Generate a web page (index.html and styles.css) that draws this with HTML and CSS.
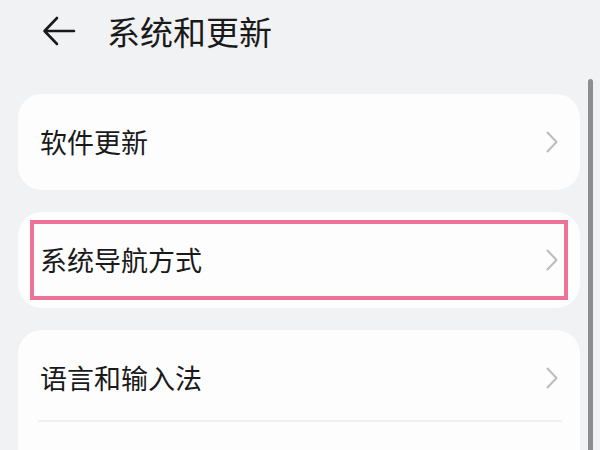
FILE: index.html
```html
<!DOCTYPE html>
<html lang="zh-CN">
<head>
<meta charset="utf-8">
<link rel="stylesheet" href="styles.css">
</head>
<body>
<div class="screen">
  <header class="header">
    <svg class="back" width="34" height="32" viewBox="0 0 34 32">
      <path d="M32 16 H3 M15 3 L2.5 16 L15 29" fill="none" stroke="#1a1a1a" stroke-width="2.6" stroke-linecap="round" stroke-linejoin="round"/>
    </svg>
    <h1 class="title">系统和更新</h1>
  </header>
  <main class="list">
    <section class="card">
      <div class="row">
        <span class="label">软件更新</span>
        <svg class="chev" width="12" height="22" viewBox="0 0 12 22"><path d="M1.5 1.5 L10.5 11 L1.5 20.5" fill="none" stroke="#bcbcbc" stroke-width="2" stroke-linecap="round" stroke-linejoin="round"/></svg>
      </div>
    </section>
    <section class="card">
      <div class="row highlighted">
        <span class="label">系统导航方式</span>
        <svg class="chev" width="12" height="22" viewBox="0 0 12 22"><path d="M1.5 1.5 L10.5 11 L1.5 20.5" fill="none" stroke="#bcbcbc" stroke-width="2" stroke-linecap="round" stroke-linejoin="round"/></svg>
      </div>
    </section>
    <section class="card">
      <div class="row first">
        <span class="label">语言和输入法</span>
        <svg class="chev" width="12" height="22" viewBox="0 0 12 22"><path d="M1.5 1.5 L10.5 11 L1.5 20.5" fill="none" stroke="#bcbcbc" stroke-width="2" stroke-linecap="round" stroke-linejoin="round"/></svg>
      </div>
      <div class="divider"></div>
      <div class="row"></div>
    </section>
  </main>
  <div class="scrollbar"></div>
</div>
</body>
</html>
```
FILE: styles.css
```css
html, body {
  margin: 0;
  padding: 0;
}
body {
  background: #f1f2f4;
  font-family: "Noto Sans CJK SC", "Noto Sans", sans-serif;
  color: #1a1a1a;
}
.screen {
  position: relative;
  width: 600px;
  height: 450px;
  overflow: hidden;
}
.header {
  height: 64px;
  display: flex;
  align-items: center;
  padding-left: 42px;
}
.back {
  display: block;
  margin-top: -2px;
}
.title {
  margin: 0 0 0 31px;
  font-size: 33px;
  font-weight: 400;
  line-height: 40px;
  margin-top: -2px;
}
.list {
  margin-top: 30px;
  padding: 0 20px 0 18px;
  display: flex;
  flex-direction: column;
  gap: 22px;
}
.card {
  background: #fdfdfd;
  border-radius: 24px;
}
.row {
  position: relative;
  height: 96px;
  display: flex;
  align-items: center;
  justify-content: space-between;
  padding: 0 22px 0 22px;
}
.row.first {
  height: 84px;
  padding-top: 6px;
}
.label {
  font-size: 27px;
  line-height: 36px;
  font-weight: 400;
}
.chev {
  display: block;
}
.highlighted::after {
  content: "";
  position: absolute;
  left: 12px;
  right: 12px;
  top: 8px;
  bottom: 8px;
  border: 4px solid #ec7499;
}
.divider {
  height: 2px;
  margin: 0 18px 0 20px;
  background: #efefef;
}
.scrollbar {
  position: absolute;
  left: 588px;
  top: 79px;
  width: 5px;
  height: 400px;
  border-radius: 3px;
  background: #8e8e8e;
}
```
